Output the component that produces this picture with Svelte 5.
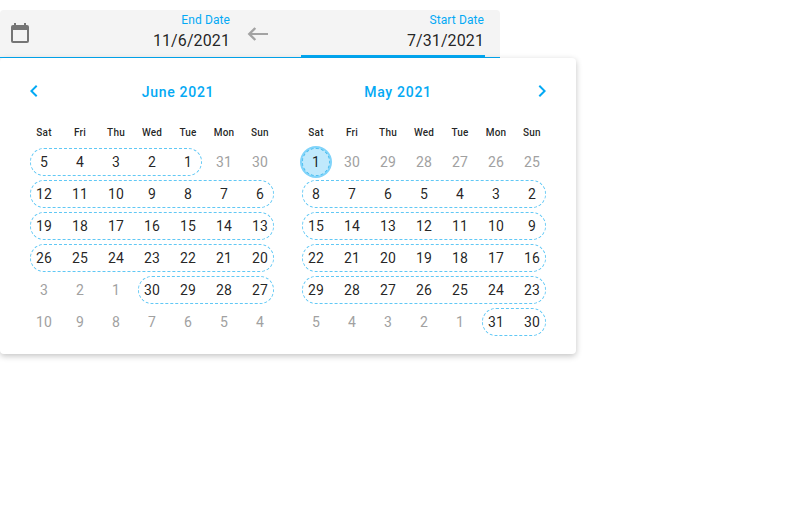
<script>
  const weekdays = ['Sat', 'Fri', 'Thu', 'Wed', 'Tue', 'Mon', 'Sun'];

  // Right-to-left weeks; "from" and "to" bound the hovered range in each row.
  const months = [
    {
      title: 'June 2021',
      weeks: [
        { days: [5, 4, 3, 2, 1, 31, 30], from: 0, to: 4 },
        { days: [12, 11, 10, 9, 8, 7, 6], from: 0, to: 6 },
        { days: [19, 18, 17, 16, 15, 14, 13], from: 0, to: 6 },
        { days: [26, 25, 24, 23, 22, 21, 20], from: 0, to: 6 },
        { days: [3, 2, 1, 30, 29, 28, 27], from: 3, to: 6 },
        { days: [10, 9, 8, 7, 6, 5, 4], from: -1, to: -2 }
      ]
    },
    {
      title: 'May 2021',
      weeks: [
        { days: [1, 30, 29, 28, 27, 26, 25], from: 0, to: 0, focus: true },
        { days: [8, 7, 6, 5, 4, 3, 2], from: 0, to: 6 },
        { days: [15, 14, 13, 12, 11, 10, 9], from: 0, to: 6 },
        { days: [22, 21, 20, 19, 18, 17, 16], from: 0, to: 6 },
        { days: [29, 28, 27, 26, 25, 24, 23], from: 0, to: 6 },
        { days: [5, 4, 3, 2, 1, 31, 30], from: 5, to: 6 }
      ]
    }
  ];
</script>

<main>
  <div class="field">
    <svg class="calendar" width="24" height="24" viewBox="0 0 24 24" aria-hidden="true">
      <path d="M19 3h-1V1h-2v2H8V1H6v2H5a2 2 0 0 0-2 2v14a2 2 0 0 0 2 2h14a2 2 0 0 0 2-2V5a2 2 0 0 0-2-2zm0 16H5V8h14z" />
    </svg>
    <div class="box end">
      <span class="label">End Date</span>
      <span class="value">11/6/2021</span>
    </div>
    <svg class="arrow" width="24" height="24" viewBox="0 0 24 24" aria-hidden="true">
      <path d="M22 12H3.5" />
      <path class="head" d="M9.3 6l-6 6 6 6" />
    </svg>
    <div class="box start">
      <span class="label">Start Date</span>
      <span class="value">7/31/2021</span>
    </div>
  </div>

  <div class="popup">
    <header>
      <button aria-label="Next month">
        <svg width="24" height="24" viewBox="0 0 24 24">
          <path d="M15.4 7.4 14 6l-6 6 6 6 1.4-1.4L10.8 12z" />
        </svg>
      </button>
      {#each months as month}<h2>{month.title}</h2>{/each}
      <button class="right" aria-label="Previous month">
        <svg width="24" height="24" viewBox="0 0 24 24">
          <path d="M10 6 8.6 7.4l4.6 4.6-4.6 4.6L10 18l6-6z" />
        </svg>
      </button>
    </header>
    <div class="months">
      {#each months as month}
        <section>
          <div class="row names">
            {#each weekdays as name}<span>{name}</span>{/each}
          </div>
          {#each month.weeks as week}
            <div class="row">
              {#if week.to >= 0}
                <i
                  class="range"
                  class:focus={week.focus}
                  style:left="{week.from * 36 + 4}px"
                  style:width="{(week.to - week.from) * 36 + 28}px"
                ></i>
              {/if}
              {#each week.days as day, i}
                <span class="day" class:other={i < week.from || i > week.to}>{day}</span>
              {/each}
            </div>
          {/each}
        </section>
      {/each}
    </div>
  </div>
</main>

<style>
  :global(body) {
    font-family: Roboto, 'Noto Sans', sans-serif;
    background: #fff;
    color: rgba(0, 0, 0, 0.87);
  }
  main {
    box-sizing: border-box;
    height: 510px;
    padding-top: 10px;
  }
  .field {
    box-sizing: border-box;
    width: 500px;
    height: 48px;
    display: flex;
    background: #f4f4f4;
    border-radius: 4px 4px 0 0;
    border-bottom: 1px solid #03a9f4;
  }
  .calendar {
    margin: 12px 0 0 8px;
    fill: #757575;
  }
  .box {
    position: relative;
    box-sizing: border-box;
    display: flex;
    flex-direction: column;
    align-items: flex-end;
    width: 184px;
    height: 48px;
    padding-top: 3px;
  }
  .end {
    margin-left: 14px;
  }
  .start {
    margin-left: 31px;
    padding-right: 1px;
    border-bottom: 3px solid #03a9f4;
  }
  .label {
    font-size: 12px;
    line-height: 14px;
    letter-spacing: 0.1px;
    color: #03a9f4;
  }
  .value {
    font-size: 16px;
    line-height: 20px;
    margin-top: 4px;
    letter-spacing: 0.1px;
  }
  .arrow {
    margin: 12px 0 0 16px;
    fill: none;
    stroke: #a3a3a3;
    stroke-width: 2;
  }
  .arrow .head {
    stroke-width: 2.4;
  }
  .popup {
    position: relative;
    box-sizing: border-box;
    width: 576px;
    height: 296px;
    padding-top: 16px;
    background: #fff;
    border-radius: 4px;
    box-shadow: 0 2px 6px rgba(0, 0, 0, 0.24);
  }
  header {
    display: flex;
    align-items: center;
    height: 36px;
    padding: 0 22px;
  }
  h2 {
    flex: 1;
    margin: 0;
    text-align: center;
    font-size: 14px;
    line-height: 18px;
    font-weight: 500;
    letter-spacing: 0.7px;
    color: #03a9f4;
  }
  button {
    display: flex;
    width: 46px;
    height: 24px;
    margin-bottom: 2px;
    padding: 0;
    border: 0;
    background: none;
  }
  .right {
    justify-content: flex-end;
  }
  button svg {
    fill: #03a9f4;
    flex: none;
  }
  .months {
    display: flex;
    gap: 20px;
    padding: 4px 26px 0;
  }
  section {
    width: 252px;
  }
  .row {
    position: relative;
    display: flex;
    height: 32px;
  }
  .row span {
    position: relative;
    width: 36px;
    text-align: center;
  }
  .names {
    font-size: 10px;
    line-height: 38px;
    font-weight: 500;
    letter-spacing: 0.2px;
  }
  .day {
    font-size: 14px;
    line-height: 32px;
    letter-spacing: 0.1px;
  }
  .other {
    color: #a1a1a1;
  }
  /* Dashed outline behind the days of one week's part of the range. */
  .range {
    position: absolute;
    box-sizing: border-box;
    top: 2px;
    height: 28px;
    border: 1px dashed #61c8f5;
    border-radius: 14px;
  }
  .focus {
    background: #c0e9fc;
    border-color: #4fc0f0;
    box-shadow: 0 0 0 2px #81d4fa;
  }
</style>
